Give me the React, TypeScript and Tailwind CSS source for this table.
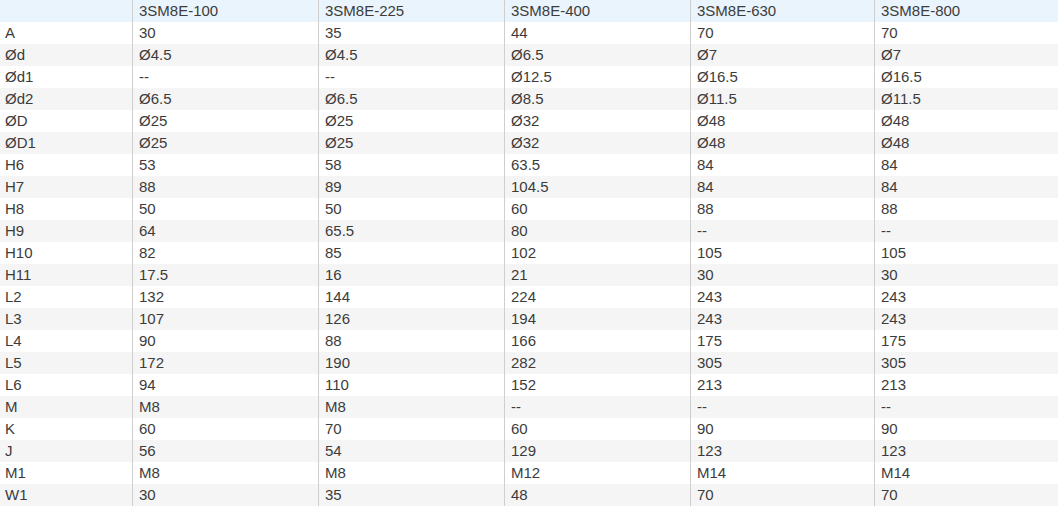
const headers = ['', '3SM8E-100', '3SM8E-225', '3SM8E-400', '3SM8E-630', '3SM8E-800'];

const rows: string[][] = [
    ['A', '30', '35', '44', '70', '70'],
    ['Ød', 'Ø4.5', 'Ø4.5', 'Ø6.5', 'Ø7', 'Ø7'],
    ['Ød1', '--', '--', 'Ø12.5', 'Ø16.5', 'Ø16.5'],
    ['Ød2', 'Ø6.5', 'Ø6.5', 'Ø8.5', 'Ø11.5', 'Ø11.5'],
    ['ØD', 'Ø25', 'Ø25', 'Ø32', 'Ø48', 'Ø48'],
    ['ØD1', 'Ø25', 'Ø25', 'Ø32', 'Ø48', 'Ø48'],
    ['H6', '53', '58', '63.5', '84', '84'],
    ['H7', '88', '89', '104.5', '84', '84'],
    ['H8', '50', '50', '60', '88', '88'],
    ['H9', '64', '65.5', '80', '--', '--'],
    ['H10', '82', '85', '102', '105', '105'],
    ['H11', '17.5', '16', '21', '30', '30'],
    ['L2', '132', '144', '224', '243', '243'],
    ['L3', '107', '126', '194', '243', '243'],
    ['L4', '90', '88', '166', '175', '175'],
    ['L5', '172', '190', '282', '305', '305'],
    ['L6', '94', '110', '152', '213', '213'],
    ['M', 'M8', 'M8', '--', '--', '--'],
    ['K', '60', '70', '60', '90', '90'],
    ['J', '56', '54', '129', '123', '123'],
    ['M1', 'M8', 'M8', 'M12', 'M14', 'M14'],
    ['W1', '30', '35', '48', '70', '70'],
];

function Row({ cells, bg }: { cells: string[]; bg: string }) {
    return (
        <div className={`grid grid-cols-[132px_186px_186px_186px_184px_184px] h-[22px] ${bg}`}>
            {cells.map((c, i) => (
                <div
                    key={i}
                    className={`leading-[22px] whitespace-nowrap ${i === 0 ? 'pl-[5px]' : 'pl-[6px] border-l-[1.5px] border-[#cfcfcf]'}`}
                >
                    {c}
                </div>
            ))}
        </div>
    );
}

export default function App() {
    return (
        <div className="w-[1060px] h-[508px] bg-white text-[15px] text-[#3c3c3c] font-['Liberation_Sans',Arial,sans-serif]">
            <div className="w-[1058px]">
                {/* Заголовок */}
                <Row cells={headers} bg="bg-[#e9f4fd]" />

                {/* Данные */}
                {rows.map((r, i) => (
                    <Row key={r[0]} cells={r} bg={i % 2 === 0 ? 'bg-white' : 'bg-[#f5f5f5]'} />
                ))}
            </div>
        </div>
    );
}
